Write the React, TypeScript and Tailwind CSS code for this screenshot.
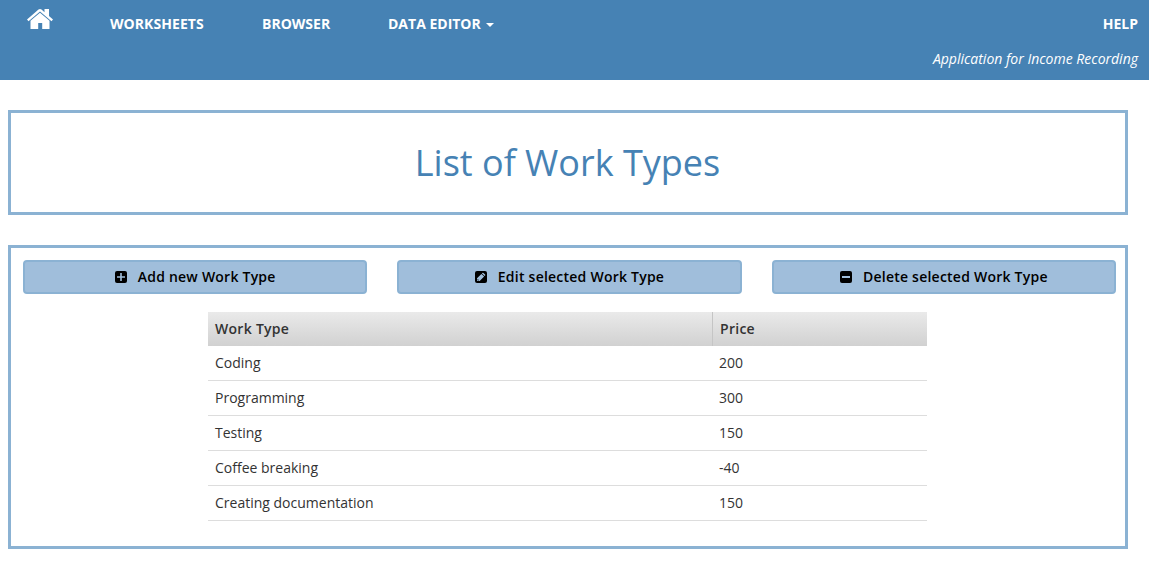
const rows = [
  ["Coding", "200"],
  ["Programming", "300"],
  ["Testing", "150"],
  ["Coffee breaking", "-40"],
  ["Creating documentation", "150"],
];

type ActionKind = "add" | "edit" | "delete";

const actions: { label: string; kind: ActionKind }[] = [
  { label: "Add new Work Type", kind: "add" },
  { label: "Edit selected Work Type", kind: "edit" },
  { label: "Delete selected Work Type", kind: "delete" },
];

function HomeIcon() {
  return (
    <svg width="26" height="21" viewBox="0 0 26 21" fill="currentColor">
      <path d="M11.5.6Q13-.6 14.5.6L17.5 3.2V0H22V7.1L26 10.6 24.5 12.3 13 2.6 1.5 12.3 0 10.6Z" />
      <path d="M13 3.8 22.5 11.8V20H15.2V14H11.2V20H3.5V11.8Z" />
    </svg>
  );
}

function ActionIcon({ kind }: { kind: ActionKind }) {
  return (
    <svg width="12" height="12" viewBox="0 0 12 12" className="shrink-0">
      <rect width="12" height="12" rx="2" fill="#000" />
      {kind === "add" && <path d="M2 5.2H5.2V2H6.8V5.2H10V6.8H6.8V10H5.2V6.8H2Z" fill="#a0bedb" />}
      {kind === "delete" && <path d="M2 5H10V7H2Z" fill="#a0bedb" />}
      {kind === "edit" && (
        <>
          <path d="M2 10V7.3L6.4 2.9 9.1 5.6 4.7 10ZM6.9 2.4 7.4 1.9Q7.9 1.5 8.4 1.9L10.1 3.6Q10.5 4.1 10.1 4.6L9.6 5.1Z" fill="#a0bedb" />
          <path d="M2.8 8.1V9.2H3.9" fill="none" stroke="#000" strokeWidth=".6" />
        </>
      )}
    </svg>
  );
}

export default function App() {
  return (
    <div className="h-[563px] overflow-hidden bg-white font-['Open_Sans',sans-serif] text-sm text-[#333]">
      <header className="h-20 bg-[#4682b4] px-[11px] text-white">
        <nav className="flex h-12 items-center font-bold leading-5">
          <a className="-mt-[10px] ml-4 block w-[26px]"><HomeIcon /></a>
          <a className="ml-[57px] w-[152px] tracking-[0.06px]">WORKSHEETS</a>
          <a className="w-[126px]">BROWSER</a>
          <a className="flex items-center">DATA EDITOR<span className="ml-[5px] mt-px border-x-4 border-t-4 border-x-transparent border-t-white" /></a>
          <a className="ml-auto">HELP</a>
        </nav>
        <p className="mt-px text-right italic leading-5">Application for Income Recording</p>
      </header>
      <section className="ml-2 mt-[30px] flex h-[105px] w-[1120px] items-center justify-center border-[3px] border-[#8bb2d3]">
        <h1 className="-ml-px text-[36px] leading-10 text-[#4682b4]">List of Work Types</h1>
      </section>
      <section className="ml-2 mt-[30px] h-[304px] w-[1120px] border-[3px] border-[#8bb2d3] px-3 pt-3">
        <div className="grid w-[1093px] grid-cols-3 gap-[30px]">
          {actions.map(({ label, kind }) => (
            <button key={label} className="flex h-[34px] items-center justify-center gap-[11px] rounded-[4px] border-2 border-[#8bb2d3] bg-[#a0bedb] font-semibold tracking-[0.23px] text-black">
              <ActionIcon kind={kind} />{label}
            </button>
          ))}
        </div>
        <div className="ml-[185px] mt-[18px] w-[719px]">
          <div className="flex h-[34px] items-center bg-linear-to-b from-[#eaeaea] to-[#d1d1d1] font-semibold tracking-[0.28px]">
            <div className="flex h-full w-[505px] items-center border-r border-[#c5c5c5] pl-[7px]">Work Type</div>
            <div className="pl-[7px]">Price</div>
          </div>
          {rows.map(([name, price]) => (
            <div key={name} className="flex h-[35px] items-center border-b border-[#ddd]">
              <div className="w-[504px] pl-[7px]">{name}</div>
              <div className="pl-[7px]">{price}</div>
            </div>
          ))}
        </div>
      </section>
    </div>
  );
}
